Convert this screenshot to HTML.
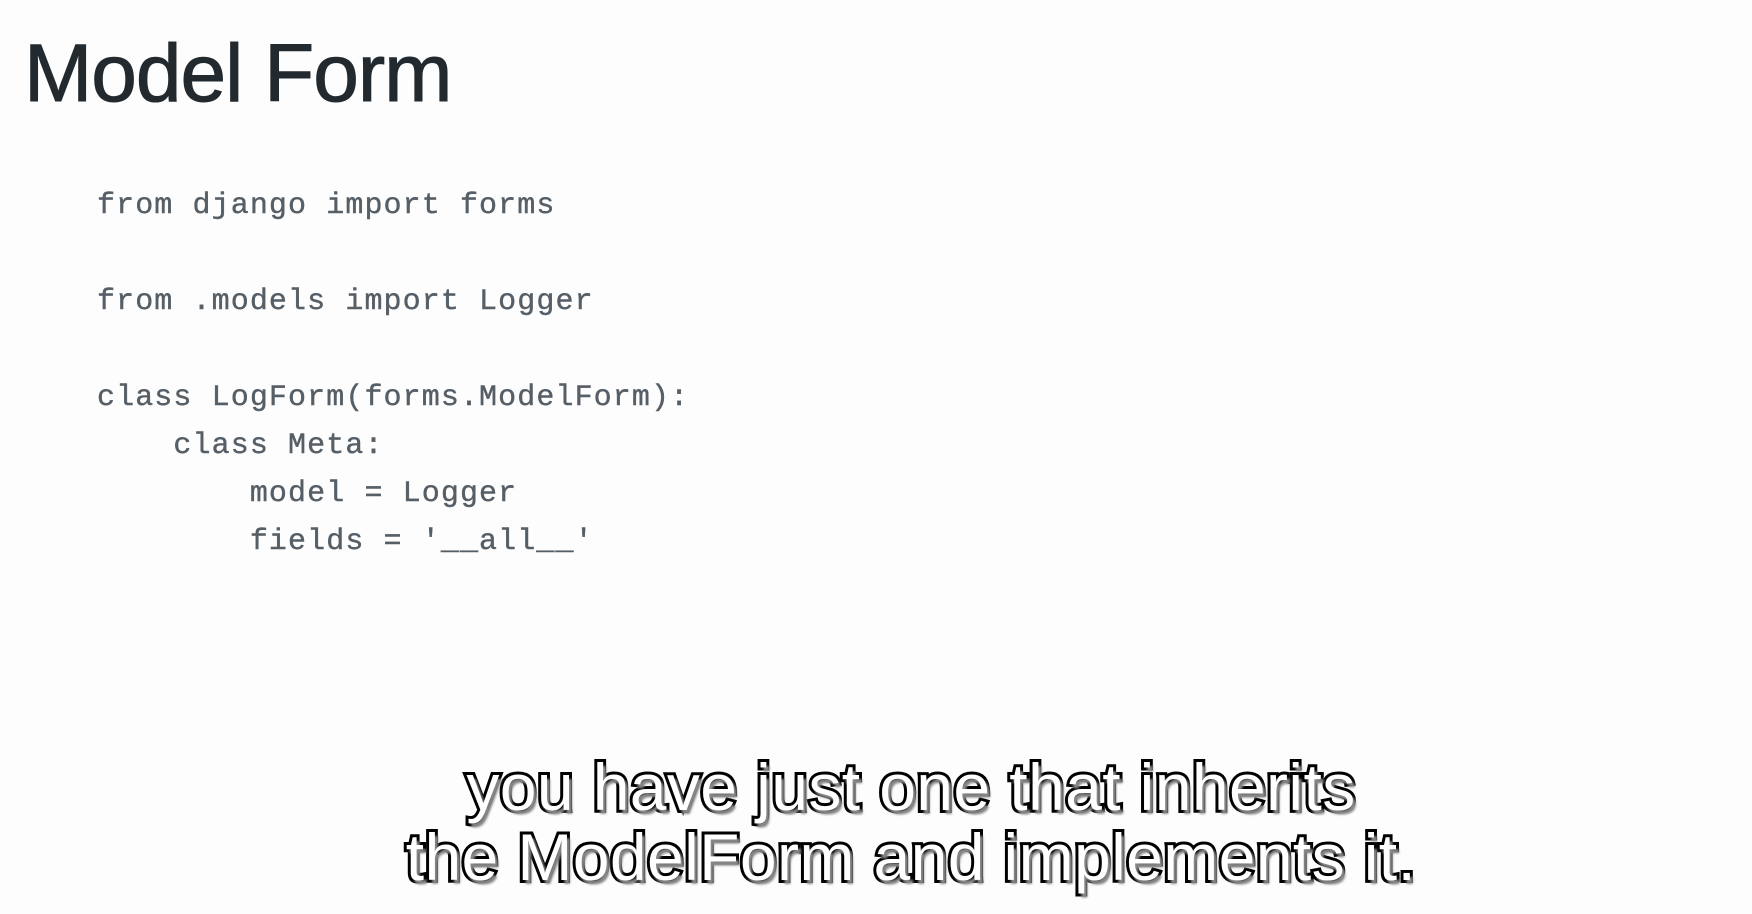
<!DOCTYPE html>
<html><head><meta charset="utf-8"><style>
html,body{margin:0;padding:0;}
body{width:1752px;height:914px;background:#fdfdfd;position:relative;overflow:hidden;}
.t{position:absolute;left:24px;top:24px;font-family:"Liberation Sans",sans-serif;font-size:82px;color:#222a30;letter-spacing:-1px;line-height:100px;-webkit-text-stroke:1px #222a30;}
.c{position:absolute;left:97px;font-family:"Liberation Mono",monospace;font-size:30px;color:#565e66;letter-spacing:1.1px;white-space:pre;line-height:30px;-webkit-text-stroke:0.4px #565e66;}
.s{position:absolute;left:0;width:1822px;text-align:center;font-family:"Liberation Sans",sans-serif;font-size:66px;color:#fff;-webkit-text-stroke:6px #000;paint-order:stroke fill;text-shadow:3px 4px 2px #888;letter-spacing:0.4px;line-height:70px;}
</style></head><body>
<div class="t">Model Form</div>
<div class="c" style="top:191px">from django import forms</div>
<div class="c" style="top:287px">from .models import Logger</div>
<div class="c" style="top:383px">class LogForm(forms.ModelForm):</div>
<div class="c" style="top:431px">    class Meta:</div>
<div class="c" style="top:479px">        model = Logger</div>
<div class="c" style="top:527px">        fields = '__all__'</div>
<div class="s" style="top:752px">you have just one that inherits</div>
<div class="s" style="top:822px">the ModelForm and implements it.</div>
</body></html>
